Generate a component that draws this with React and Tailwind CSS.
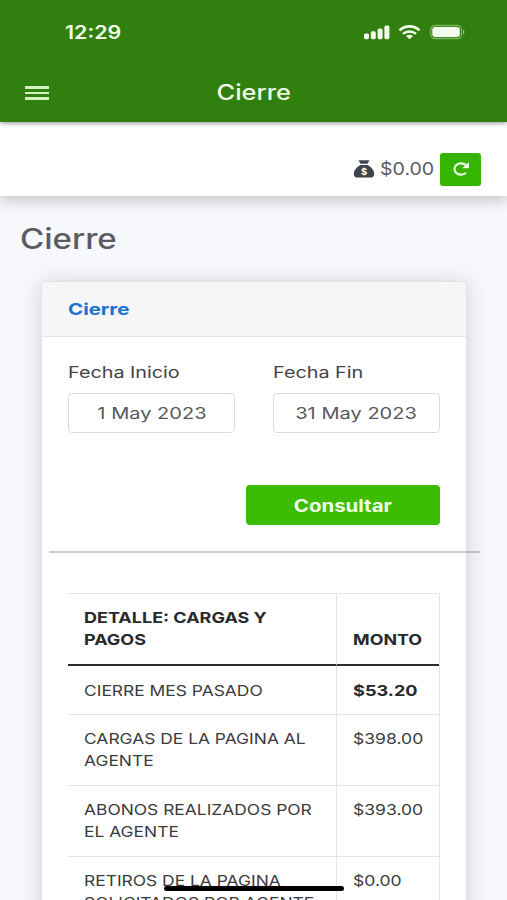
import clsx from 'clsx'

const rows = [
  { lines: ['CIERRE MES PASADO'], amount: '$53.20', bold: true, height: 'h-[49px]' },
  { lines: ['CARGAS DE LA PAGINA AL', 'AGENTE'], amount: '$398.00', height: 'h-[71px]' },
  { lines: ['ABONOS REALIZADOS POR', 'EL AGENTE'], amount: '$393.00', height: 'h-[71px]' },
  { lines: ['RETIROS DE LA PAGINA', 'SOLICITADOS POR AGENTE'], amount: '$0.00', height: 'h-[71px]' },
]

// Wide text, stretched from its left edge
function Wide({ className = 'scale-x-[1.16]', children }) {
  return <span className={clsx('inline-block origin-left whitespace-nowrap', className)}>{children}</span>
}

function StatusBar() {
  return (
    <div className="flex h-[62px] items-center justify-between pl-[65px] pr-[42px] pt-[2px] text-[18px] font-semibold text-[#effbe6]">
      <Wide className="scale-x-[1.19]">12:29</Wide>
      <svg width="102" height="16" viewBox="0 0 102 16" fill="#f4fdee">
        <rect x="1" y="9.6" width="5" height="5.6" rx="1.6" />
        <rect x="7.8" y="7.2" width="5" height="8" rx="1.6" />
        <rect x="14.6" y="4.4" width="5" height="10.8" rx="1.6" />
        <rect x="21.4" y="1.6" width="5" height="13.6" rx="1.6" />
        <g fill="none" stroke="#f4fdee" strokeWidth="2.6">
          <path d="M36.5 6.4C42 1 51 1 56.500 6.400" />
          <path d="M40 9.900c3.700-3.300 9.300-3.300 13 0" />
        </g>
        <path d="M43 12.100c2-1.700 5-1.700 7 0L46.500 15.300z" />
        <rect x="67.700" y="1.500" width="31" height="13" rx="4.500" fill="none" stroke="#7fb366" strokeWidth="1.300" />
        <rect x="69.300" y="3" width="27.600" height="10" rx="3.200" />
        <path d="M100 6c2 .6 2 3.400 0 4z" fill="#8fbd78" />
      </svg>
    </div>
  )
}

function MoneyBag() {
  return (
    <svg width="22" height="20" viewBox="0 0 22 20">
      <path d="M5.500 1.200h11l-2 3.600h-7z" fill="#3f444a" />
      <path d="M7.200 6h7.600c3.700 2.300 6.400 5.400 6.400 8.900 0 2.400-1.500 3.700-3.700 3.700h-13C2.300 18.600.8 17.300.8 14.900.8 11.400 3.500 8.300 7.200 6z" fill="#3f444a" />
      <text x="11" y="15.800" textAnchor="middle" fontSize="9.500" fontWeight="700" fill="#fff">$</text>
    </svg>
  )
}

function DateField({ label, value }) {
  return (
    <div className="w-[167px]">
      <div className="h-[34px] pt-[0.5px] text-[16px] leading-[24px] text-[#414347]">
        <Wide className="scale-x-[1.235]">{label}</Wide>
      </div>
      <div className="flex h-[40px] items-center justify-center rounded border border-[#d9dbde] text-[16.500px] text-[#58595c]">
        <span className="inline-block scale-x-[1.215] whitespace-nowrap">{value}</span>
      </div>
    </div>
  )
}

export default function App() {
  return (
    <div className="relative h-[900px] w-[507px] overflow-hidden bg-[#f7f8fc] font-[Inter,sans-serif]">
      <header className="relative z-20 h-[122px] bg-[#31800f] shadow-[0_1px_5px_rgba(0,0,0,0.45)]">
        <StatusBar />
        <div className="grid h-[60px] grid-cols-[1fr_auto_1fr] items-center px-[25px] pt-[2px]">
          <div className="flex w-6 flex-col gap-[3px]">
            <span className="h-[2.400px] bg-[#d5f2c3]" />
            <span className="h-[2.400px] bg-[#d5f2c3]" />
            <span className="h-[2.400px] bg-[#d5f2c3]" />
          </div>
          <h1 className="scale-x-[1.21] text-[21px] font-[550] text-[#effbe6]">Cierre</h1>
        </div>
      </header>

      <div className="relative z-10 flex h-[74px] items-center justify-end bg-white pr-[26px] pt-[20px] shadow-[0_4px_14px_rgba(0,0,0,0.22)]">
        <MoneyBag />
        <div className="ml-[5px] w-[60px] pt-[2px] text-[17px] text-[#5a5c60]">
          <Wide className="scale-x-[1.15]">$0.00</Wide>
        </div>
        <button className="flex h-[33px] w-[41px] items-center justify-center rounded-[3px] bg-[#35b400]">
          <svg width="18" height="16" viewBox="0 0 18 16" fill="none" stroke="#eaffdf" strokeWidth="2.200">
            <path d="M14 11.800A6.600 5.700 0 1 1 14 4.200" />
            <path d="M17 1v6.200h-7z" fill="#eaffdf" stroke="none" />
          </svg>
        </button>
      </div>

      <h2 className="ml-[20px] mt-[21px] text-[28px] font-[450] leading-[44px] text-[#5a5c63]">
        <Wide className="scale-x-[1.18]">Cierre</Wide>
      </h2>

      <section className="ml-[41px] mt-[20px] h-[700px] w-[426px] rounded-[5px] border border-[#e0e2e5] bg-white shadow-[0_2px_22px_rgba(58,59,69,0.2)]">
        <div className="flex h-[55px] items-center rounded-t-[4px] border-b border-[#e3e5e8] bg-[#f6f6f6] pl-[26px] text-[16.500px] font-bold text-[#1b72d2]">
          <Wide className="scale-x-[1.24]">Cierre</Wide>
        </div>
        <div className="px-[26px] pt-[22px]">
          <div className="flex justify-between">
            <DateField label="Fecha Inicio" value="1 May 2023" />
            <DateField label="Fecha Fin" value="31 May 2023" />
          </div>
          <button className="ml-auto mt-[52px] flex h-[40px] w-[194px] items-center justify-center rounded bg-[#3cbd02] pt-[3px] text-[17px] font-bold text-[#f0ffe8]">
            <span className="inline-block scale-x-[1.2]">Consultar</span>
          </button>
          <hr className="-ml-[19px] mt-[26px] w-[431px] border-0 border-t-2 border-black/20" />

          <table className="mt-[40px] w-[372px] table-fixed border-separate border-spacing-0 border-r border-t border-[#e3e5e8] text-[15px] leading-[22px] text-[#3a3b3e]">
            <colgroup>
              <col className="w-[268px]" />
              <col className="w-[103px]" />
            </colgroup>
            <thead>
              <tr className="h-[72px] text-left font-bold text-[#28292c]">
                <th className="border-b-2 border-[#2c2d30] pb-[13px] pl-[16px] align-bottom">
                  <Wide className="scale-x-[1.2]">DETALLE: CARGAS Y</Wide>
                  <br />
                  <Wide className="scale-x-[1.2]">PAGOS</Wide>
                </th>
                <th className="border-b-2 border-l border-b-[#2c2d30] border-l-[#e3e5e8] pb-[13px] pl-[16px] align-bottom">
                  <Wide className="scale-x-[1.19]">MONTO</Wide>
                </th>
              </tr>
            </thead>
            <tbody>
              {rows.map((row) => (
                <tr key={row.lines[0]} className={row.height}>
                  <td className={clsx('border-b border-[#e3e5e8] pl-[16px] align-top', row.bold ? 'pt-[14px]' : 'pt-[13px]')}>
                    {row.lines.map((line) => (
                      <div key={line} className="h-[22px]">
                        <Wide>{line}</Wide>
                      </div>
                    ))}
                  </td>
                  <td
                    className={clsx(
                      'border-b border-l border-[#e3e5e8] pl-[16px] align-top',
                      row.bold ? 'pt-[14px] font-bold text-[#28292c]' : 'pt-[13px]',
                    )}
                  >
                    <Wide className={row.bold ? 'scale-x-[1.21]' : 'scale-x-[1.17]'}>{row.amount}</Wide>
                  </td>
                </tr>
              ))}
            </tbody>
          </table>
        </div>
      </section>

      {/* Home indicator */}
      <div className="absolute left-[164px] top-[886px] z-30 h-[5px] w-[180px] rounded-full bg-black" />
    </div>
  )
}
